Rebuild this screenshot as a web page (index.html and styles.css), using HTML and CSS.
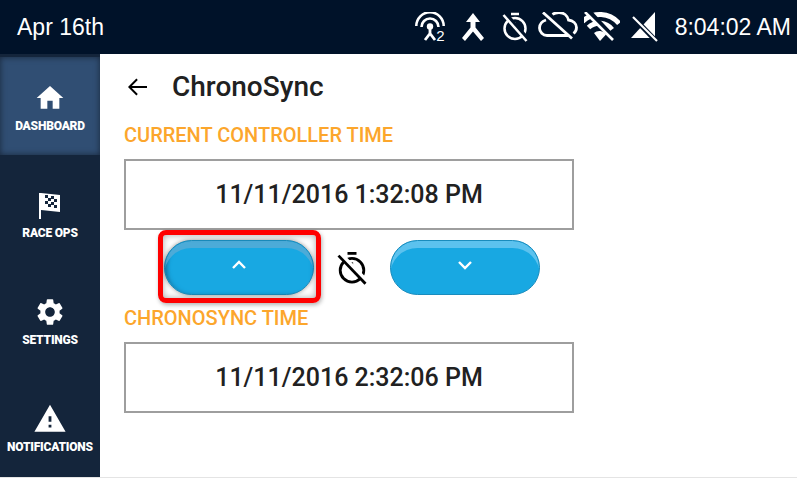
FILE: index.html
```html
<!DOCTYPE html>
<html lang="en">

<head>
    <meta charset="UTF-8">
    <title>ChronoSync</title>
    <link rel="stylesheet" href="styles.css">
</head>

<body>
    <header class="top-bar">
        <span class="date">Apr 16th</span>
        <div class="status">
            <span class="antenna">
                <svg width="30" height="30" viewBox="0 0 30 30" fill="none" stroke="#fff" stroke-width="2.600">
                    <path d="M1.300 14A13.700 13.700 0 0 1 28.700 14" />
                    <path d="M6.500 15A8.500 8.500 0 0 1 23.500 15" />
                    <circle cx="15" cy="14.500" r="3.200" fill="#fff" stroke="none" />
                    <path d="M15 17v4.500M10 28l5-6.500 5 6.500" stroke-width="2.800" />
                </svg>
                <span class="antenna-num">2</span>
            </span>
            <svg class="merge" width="24" height="30" viewBox="0 0 24 30" fill="#fff">
                <path d="M12 1l7 9h-4.500v5.500L23 26l-3 3-8-9.500L4 29l-3-3 8.500-10.500V10H5z" />
            </svg>
            <svg class="timer" width="28" height="30" viewBox="0 0 28 30" fill="none" stroke="#fff" stroke-width="2.500">
                <path d="M10 2h8" />
                <circle cx="14" cy="16.500" r="10.500" />
                <path d="M14 10v4" stroke-width="2" />
                <path d="M4 2l22 25" stroke="#001229" stroke-width="5" />
                <path d="M2.500 3l23 26" />
            </svg>
            <svg class="cloud" width="40" height="30" viewBox="0 0 40 30" fill="none" stroke="#fff" stroke-width="2.800">
                <path d="M8 8C3.500 9.500 1.500 13 1.500 16c0 4 3.500 7.500 7.500 7.500h21" />
                <path d="M14.500 2.500C16.500 1 19 .500 21 .500c4.500 0 8.500 3 9.500 7.500 4.500.5 8 3.500 8 7.500 0 2.500-1 4.500-3 6" />
                <path d="M5 .500l29 26" />
            </svg>
            <svg class="wifi" width="36" height="30" viewBox="0 0 36 30" fill="none" stroke="#fff">
                <path d="M-1.500 9.500A25 25 0 0 1 35 11.500" stroke-width="5" />
                <path d="M4.500 15.500A16 16 0 0 1 28 17.500" stroke-width="5" />
                <path d="M10 21a8 8 0 0 1 12 1.500L16 29z" fill="#fff" stroke="none" />
                <path d="M3.500 -2l28 30" stroke="#001229" stroke-width="5" />
                <path d="M1 0l28 28" stroke-width="2.600" />
            </svg>
            <svg class="signal" width="30" height="30" viewBox="0 0 30 30">
                <path d="M26 0v26H2z" fill="#fff" />
                <path d="M3 4l25 26" stroke="#001229" stroke-width="5" />
                <path d="M4 5l24 24" stroke="#fff" stroke-width="2.200" />
            </svg>
            <span class="clock">8:04:02 AM</span>
        </div>
    </header>

    <div class="layout">
        <nav class="side-nav">
            <a class="nav-item active">
                <svg width="32" height="32" viewBox="0 0 24 24" fill="#fff"><path d="M10 20v-6h4v6h5v-8h3L12 3 2 12h3v8z" /></svg>
                <span>DASHBOARD</span>
            </a>
            <a class="nav-item">
                <svg class="flag" width="26" height="30" viewBox="0 0 26 30">
                    <path d="M2 3h2v26H2z" fill="#fff" />
                    <path d="M4 3l19 2v17L4 20z" fill="#fff" />
                    <path d="M8 5h3v3H8zM14 6h3v3h-3zM11 8h3v3h-3zM17 9h3v3h-3zM8 11h3v3H8zM14 12h3v3h-3zM11 14h3v3h-3zM17 15h3v3h-3z" fill="#14253b" />
                </svg>
                <span>RACE OPS</span>
            </a>
            <a class="nav-item">
                <svg width="32" height="32" viewBox="0 0 24 24" fill="#fff"><path d="M19.140 12.940c.04-.3.060-.61.060-.94 0-.32-.02-.64-.07-.94l2.030-1.580a.49.490 0 0 0 .12-.61l-1.920-3.320a.488.488 0 0 0-.59-.22l-2.390.96c-.5-.38-1.030-.7-1.620-.94l-.36-2.540a.484.484 0 0 0-.48-.41h-3.840c-.24 0-.43.170-.47.410l-.36 2.540c-.59.240-1.130.57-1.620.94l-2.390-.96c-.22-.08-.47 0-.59.220L2.740 8.870c-.12.210-.08.470.12.610l2.030 1.580c-.05.300-.09.630-.09.940s.02.640.07.940l-2.030 1.580a.49.490 0 0 0-.12.610l1.920 3.320c.12.220.37.290.59.220l2.390-.96c.5.380 1.030.7 1.620.94l.36 2.540c.05.240.24.410.48.410h3.840c.24 0 .44-.17.470-.41l.36-2.540c.59-.24 1.130-.56 1.620-.94l2.390.96c.22.080.47 0 .59-.22l1.920-3.320c.12-.22.070-.47-.12-.61l-2.010-1.580zM12 15.600c-1.980 0-3.600-1.620-3.600-3.600s1.620-3.600 3.600-3.600 3.600 1.620 3.600 3.600-1.620 3.600-3.600 3.600z" /></svg>
                <span>SETTINGS</span>
            </a>
            <a class="nav-item">
                <svg width="34" height="34" viewBox="0 0 24 24" fill="#fff"><path d="M1 21h22L12 2 1 21zm12-3h-2v-2h2v2zm0-4h-2v-4h2v4z" /></svg>
                <span>NOTIFICATIONS</span>
            </a>
        </nav>

        <main class="content">
            <div class="title-row">
                <svg width="24" height="24" viewBox="0 0 24 24" fill="#000"><path d="M22 11H6.800l6-6L11.400 3.600 3 12l8.400 8.400 1.400-1.400-6-6H22z" /></svg>
                <h1>ChronoSync</h1>
            </div>

            <h2 class="time-label">CURRENT CONTROLLER TIME</h2>
            <div class="time-box">11/11/2016 1:32:08 PM</div>

            <div class="adjust-row">
                <button class="pill highlighted">
                    <svg width="16" height="10" viewBox="0 0 16 10" fill="none" stroke="#fff" stroke-width="2.400"><path d="M2 8l6-6 6 6" /></svg>
                </button>
                <svg class="timer-off" width="32" height="36" viewBox="0 0 28 32" fill="none" stroke="#000" stroke-width="2.500">
                    <path d="M10 3h8" />
                    <circle cx="14" cy="18" r="10.500" />
                    <path d="M14 11v4" stroke-width="2" />
                    <path d="M3.500 4l24 25" stroke="#fff" stroke-width="5" />
                    <path d="M2 5l24 25" />
                </svg>
                <button class="pill">
                    <svg width="16" height="10" viewBox="0 0 16 10" fill="none" stroke="#fff" stroke-width="2.400"><path d="M2 2l6 6 6-6" /></svg>
                </button>
            </div>

            <h2 class="time-label">CHRONOSYNC TIME</h2>
            <div class="time-box">11/11/2016 2:32:06 PM</div>
        </main>
    </div>
</body>

</html>
```

FILE: styles.css
```css
html, body {
    height: 100%;
}

body {
    margin: 0;
    display: flex;
    flex-direction: column;
    overflow: hidden;
    font-family: Roboto, Arial, sans-serif;
    background-color: #fff;
}

.top-bar {
    height: 54px;
    flex-shrink: 0;
    display: flex;
    align-items: center;
    justify-content: space-between;
    padding: 0 6px 0 17px;
    background-color: #001229;
    color: #fff;
    font-family: "Liberation Sans", Arial, sans-serif;
    font-size: 23px;
}

.status {
    display: flex;
    align-items: center;
}

.antenna {
    position: relative;
    display: flex;
}

.antenna-num {
    position: absolute;
    right: 0;
    bottom: -2px;
    font-size: 15px;
}

.merge {
    margin-left: 16px;
}

.timer {
    margin-left: 16px;
}

.cloud {
    margin-left: 9px;
}

.wifi {
    margin-left: 6px;
}

.signal {
    margin-left: 9px;
}

.clock {
    margin-left: 16px;
}

.layout {
    flex: 1;
    display: flex;
    min-height: 0;
    border-bottom: 1px solid #e4e4e4;
}

.side-nav {
    width: 100px;
    flex-shrink: 0;
    padding-top: 3px;
    background-color: #14253b;
}

.nav-item {
    height: 106px;
    display: flex;
    flex-direction: column;
    align-items: center;
    justify-content: center;
    gap: 5px;
    color: #fff;
    font-size: 12px;
    font-weight: 900;
    letter-spacing: -0.2px;
}

.nav-item.active {
    height: 98px;
    margin-bottom: 8px;
    padding-top: 3px;
    box-sizing: border-box;
    background-color: #304e73;
    box-shadow: inset 0 0 6px rgba(0, 0, 0, 0.5);
}

.nav-item:nth-child(3) {
    height: 105px;
}

.nav-item:last-child {
    gap: 4px;
    height: 107px;
}

.flag {
    margin-top: -2px;
    margin-bottom: 1px;
}

.content {
    flex: 1;
    padding: 16px 0 0 24px;
}

.title-row {
    display: flex;
    align-items: center;
    gap: 23px;
    margin-bottom: 21px;
    padding-left: 1px;
}

h1 {
    margin: 0;
    font-size: 28px;
    font-weight: 500;
    color: #212121;
}

.time-label {
    margin: 0 0 13px;
    font-size: 20px;
    font-weight: 500;
    line-height: 22px;
    color: #fca62c;
}

.time-box {
    width: 446px;
    height: 67px;
    display: flex;
    align-items: center;
    justify-content: center;
    border: 2px solid #9e9e9e;
    font-size: 25px;
    font-weight: 500;
    color: #212121;
}

.adjust-row {
    display: flex;
    align-items: center;
    gap: 22px;
    margin: 10px 0 12px 40px;
}

.pill {
    position: relative;
    width: 150px;
    height: 55px;
    padding: 0 0 4px;
    border: 1px solid #1a8cbd;
    border-radius: 28px;
    background-color: #18a8e2;
    box-shadow: inset 0 8px 0 -1px #5cc2ee;
}

.pill.highlighted {
    box-shadow: inset 0 8px 0 -1px #4cabd8, inset 4px 0 5px -3px #15719c, 0 0 4px rgba(0, 0, 0, 0.4);
}

/* red marker drawn over the button */
.pill.highlighted::after {
    content: "";
    position: absolute;
    top: -11px;
    left: -7px;
    right: -8px;
    bottom: -9px;
    border: 5px solid #f00;
    border-radius: 8px;
    box-shadow: inset 0 0 7px rgba(0, 0, 0, 0.35), 1px 2px 4px rgba(0, 0, 0, 0.3);
}
```
